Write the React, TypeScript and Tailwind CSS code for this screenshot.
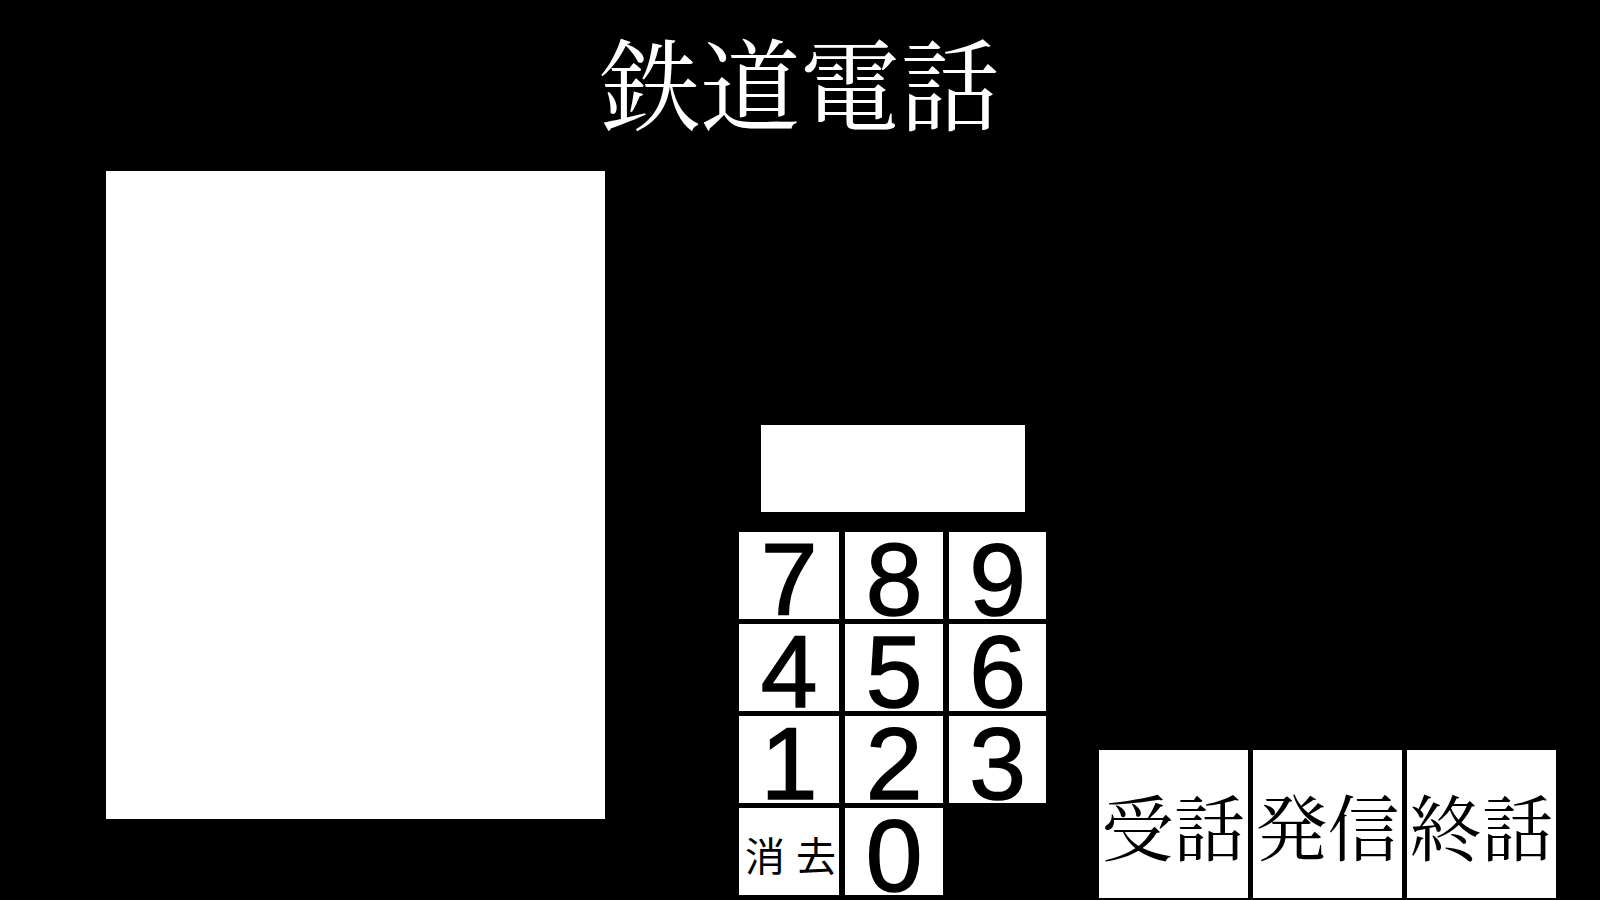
import React from "react";

const serif = { fontFamily: '"Noto Serif CJK JP", "Liberation Serif", "Noto Sans CJK JP", serif' };

function Key({ label }: { label: string }) {
  return (
    <div className="flex h-[87px] justify-center bg-white text-black">
      <span className="mt-[9px] block h-[78px] text-[102px] leading-[78px] [-webkit-text-stroke:1.5px_black] [font-family:'Liberation_Sans',Arial,sans-serif]">
        {label}
      </span>
    </div>
  );
}

export default function App() {
  const rows = [
    ["7", "8", "9"],
    ["4", "5", "6"],
    ["1", "2", "3"],
  ];
  return (
    <div className="h-[900px] w-full overflow-hidden bg-black">
      <div className="flex h-[171px] items-start justify-center pt-[30px]">
        <h1 className="text-[100px] leading-none text-white" style={serif}>
          鉄道電話
        </h1>
      </div>
      <div className="flex items-start">
        <div className="ml-[106px] h-[648px] w-[499px] bg-white" />
        <div className="ml-[134px] mt-[254px] flex flex-col">
          <div className="ml-[22px] h-[87px] w-[264px] bg-white" />
          <div className="mt-[20px] grid grid-cols-[100px_98px_97px] gap-x-[6px] gap-y-[5px]">
            {rows.flat().map((d) => (
              <Key key={d} label={d} />
            ))}
            <div className="flex h-[87px] items-center overflow-hidden bg-white pl-[6px] pt-[5px] text-black">
              <span className="whitespace-nowrap text-[40px] leading-none tracking-[11px] [font-family:'Noto_Sans_CJK_JP',sans-serif]">
                消去
              </span>
            </div>
            <Key label="0" />
          </div>
        </div>
        <div className="ml-[53px] mt-[579px] flex gap-[5px]">
          {["受話", "発信", "終話"].map((t) => (
            <div
              key={t}
              className="flex h-[148px] w-[149px] items-center justify-center bg-white text-black"
            >
              <span className="whitespace-nowrap text-[72px] leading-none" style={serif}>
                {t}
              </span>
            </div>
          ))}
        </div>
      </div>
    </div>
  );
}
